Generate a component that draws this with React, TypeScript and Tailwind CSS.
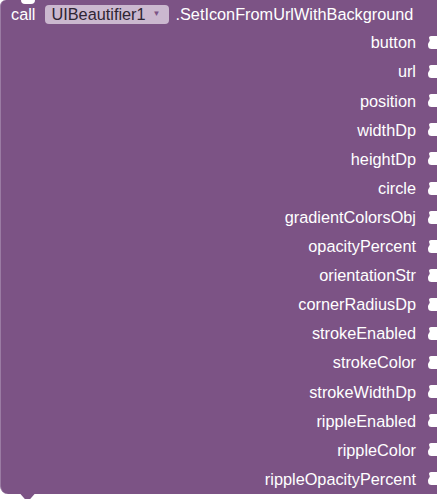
import React from 'react';

const params = [
  'button',
  'url',
  'position',
  'widthDp',
  'heightDp',
  'circle',
  'gradientColorsObj',
  'opacityPercent',
  'orientationStr',
  'cornerRadiusDp',
  'strokeEnabled',
  'strokeColor',
  'strokeWidthDp',
  'rippleEnabled',
  'rippleColor',
  'rippleOpacityPercent',
];

// white cut-out where a value block would plug in
const InputTab = () => (
  <svg width="9" height="13" viewBox="0 0 9 13" className="shrink-0">
    <path d="M9 0 H3.5 C1 0 0.5 1.5 1.5 3.5 C2.5 5.5 0 6 0 9 C0 12 1.5 13 3.5 13 H9 Z" fill="#ffffff" />
  </svg>
);

const App: React.FC = () => {
  return (
    <div className="w-[437px] h-[499px] bg-white overflow-hidden font-['Liberation_Sans',Arial,sans-serif]">
      <div className="relative w-[445px]">
        {/* block body */}
        <div className="relative bg-[#7c5385] rounded-tl-[6px] rounded-bl-[8px] border-l border-[#9a7ba3]">
          {/* previous-statement notch */}
          <div className="absolute left-[20px] top-0 w-[14px] h-[4px] bg-white rounded-b-[5px]" />

          {/* header row */}
          <div className="h-[28px] flex items-center pl-[10px] text-white text-[16.3px] leading-none">
            <span>call</span>
            <div className="ml-[10px] h-[19px] w-[124px] bg-[#cbb8cf] rounded-[4px] flex items-center pl-[6px] pr-[9px]">
              <span className="text-[#2f2533]">UIBeautifier1</span>
              <span className="ml-auto text-[#7c5385] text-[8px]">▼</span>
            </div>
            <span className="ml-[6px]">.SetIconFromUrlWithBackground</span>
          </div>

          {/* value inputs */}
          {params.map((name) => (
            <div key={name} className="h-[29.1px] flex items-center justify-end pr-[8px] text-white text-[16.3px] leading-none">
              <span>{name}</span>
              <div className="w-[12px]" />
              <InputTab />
            </div>
          ))}
        </div>

        {/* next-statement bump */}
        <div className="ml-[20px] w-[15px] h-[6px] bg-[#7c5385] [clip-path:polygon(0_0,100%_0,65%_100%,35%_100%)]" />
      </div>
    </div>
  );
};

export default App;
